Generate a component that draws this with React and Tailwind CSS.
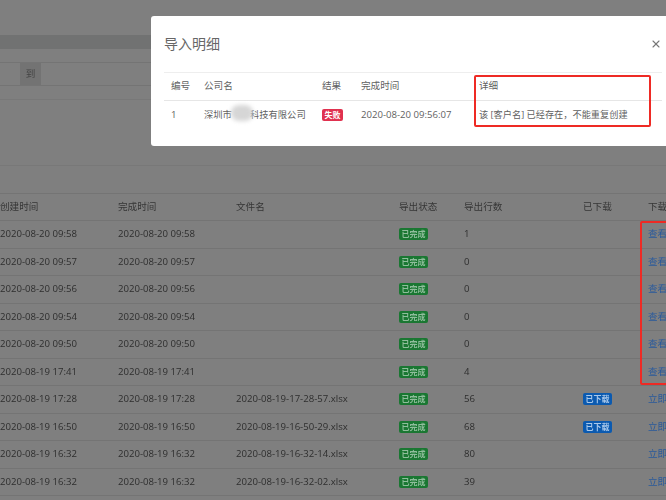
import { X } from 'lucide-react'

const rows = [
  { created: '2020-08-20 09:58', file: '', count: 1, link: '查看' },
  { created: '2020-08-20 09:57', file: '', count: 0, link: '查看' },
  { created: '2020-08-20 09:56', file: '', count: 0, link: '查看' },
  { created: '2020-08-20 09:54', file: '', count: 0, link: '查看' },
  { created: '2020-08-20 09:50', file: '', count: 0, link: '查看' },
  { created: '2020-08-19 17:41', file: '', count: 4, link: '查看' },
  { created: '2020-08-19 17:28', file: '2020-08-19-17-28-57.xlsx', count: 56, done: true, link: '立即下载' },
  { created: '2020-08-19 16:50', file: '2020-08-19-16-50-29.xlsx', count: 68, done: true, link: '立即下载' },
  { created: '2020-08-19 16:32', file: '2020-08-19-16-32-14.xlsx', count: 80, link: '立即下载' },
  { created: '2020-08-19 16:32', file: '2020-08-19-16-32-02.xlsx', count: 39, link: '立即下载' },
]

const gridCols = 'grid grid-cols-[118px_118px_163px_65px_119px_65px_200px] items-center'
const modalCols = 'grid grid-cols-[33px_118px_39px_118px_190px] items-center pl-[7px]'

function Badge({ color, children }) {
  return (
    <span className={`block h-[12px] w-[29px] rounded-[2px] text-center text-[8px] leading-[12px] font-bold whitespace-nowrap ${color}`}>
      {children}
    </span>
  )
}

function Row({ row }) {
  return (
    <div className={`${gridCols} h-[27.5px] border-b border-[#747474] text-[#2e2e2e]`}>
      <div>{row.created}</div>
      <div>{row.created}</div>
      <div>{row.file}</div>
      <div><Badge color="bg-[#1a7732] text-[#8fbd9b]">已完成</Badge></div>
      <div>{row.count}</div>
      <div>{row.done && <Badge color="bg-[#0b5ab0] text-[#a9c8ea]">已下载</Badge>}</div>
      <div className="text-[#2a5a9c]">{row.link}</div>
    </div>
  )
}

function Modal() {
  return (
    <div className="absolute left-[151px] top-[16px] h-[130px] w-[530px] rounded-[3px] bg-white pl-[13px] text-[#5f5f5f]">
      <div className="flex h-[56px] w-[498px] items-center justify-between">
        <h2 className="text-[14px] leading-none text-[#666]">导入明细</h2>
        <X size={12} strokeWidth={2.2} className="text-[#777]" />
      </div>
      <div className="w-[498px] border-t border-[#eee]">
        <div className={`${modalCols} h-[28px] border-b border-[#e6e6e6]`}>
          <div>编号</div>
          <div>公司名</div>
          <div>结果</div>
          <div>完成时间</div>
          <div>详细</div>
        </div>
        <div className={`${modalCols} h-[28px]`}>
          <div>1</div>
          <div className="relative whitespace-nowrap text-[9.3px]">
            深圳市<span className="inline-block w-[18px]" />科技有限公司
            <span className="absolute left-[27px] top-[-3px] h-[16px] w-[22px] rounded-full bg-[#d6d6d6] blur-[2px]" />
          </div>
          <div><span className="block h-[12px] w-[21px] rounded-[2px] bg-[#e0314f] text-center text-[8px] leading-[12px] font-bold text-white">失败</span></div>
          <div>2020-08-20 09:56:07</div>
          <div className="whitespace-nowrap text-[9.2px]">该 [客户名] 已经存在，不能重复创建</div>
        </div>
      </div>
    </div>
  )
}

export default function App() {
  return (
    <div className="relative h-[500px] w-[666px] overflow-hidden bg-[#7f7f7f] font-['Open_Sans','Noto_Sans_CJK_SC',sans-serif] text-[9.6px]">
      <div className="blur-[0.3px]">
        <div className="h-[35px]" />
        <div className="h-[14px] bg-[#717272]" />
        <div className="h-[13px]" />
        <div className="flex h-[24px] border-y border-[#747474] pl-[20px]">
          <div className="flex w-[21px] items-center justify-center bg-[#737373] text-[#444]">到</div>
        </div>
        <div className="h-[14px] border-b border-[#787878]" />
        <div className="h-[66px] border-b border-[#787878]" />
        <div className="h-[27px]" />
        <div className={`${gridCols} h-[28px] border-y border-[#747474] text-[#363636]`}>
          <div>创建时间</div>
          <div>完成时间</div>
          <div>文件名</div>
          <div>导出状态</div>
          <div>导出行数</div>
          <div>已下载</div>
          <div>下载</div>
        </div>
        {rows.map((row, i) => <Row key={i} row={row} />)}
        <Modal />
      </div>
      <div className="absolute left-[474px] top-[75px] h-[52px] w-[177px] rounded-[2px] border-2 border-[#ee2a24]" />
      <div className="absolute left-[640px] top-[221px] h-[164px] w-[40px] rounded-[2px] border-2 border-[#ee2a24]" />
    </div>
  )
}
